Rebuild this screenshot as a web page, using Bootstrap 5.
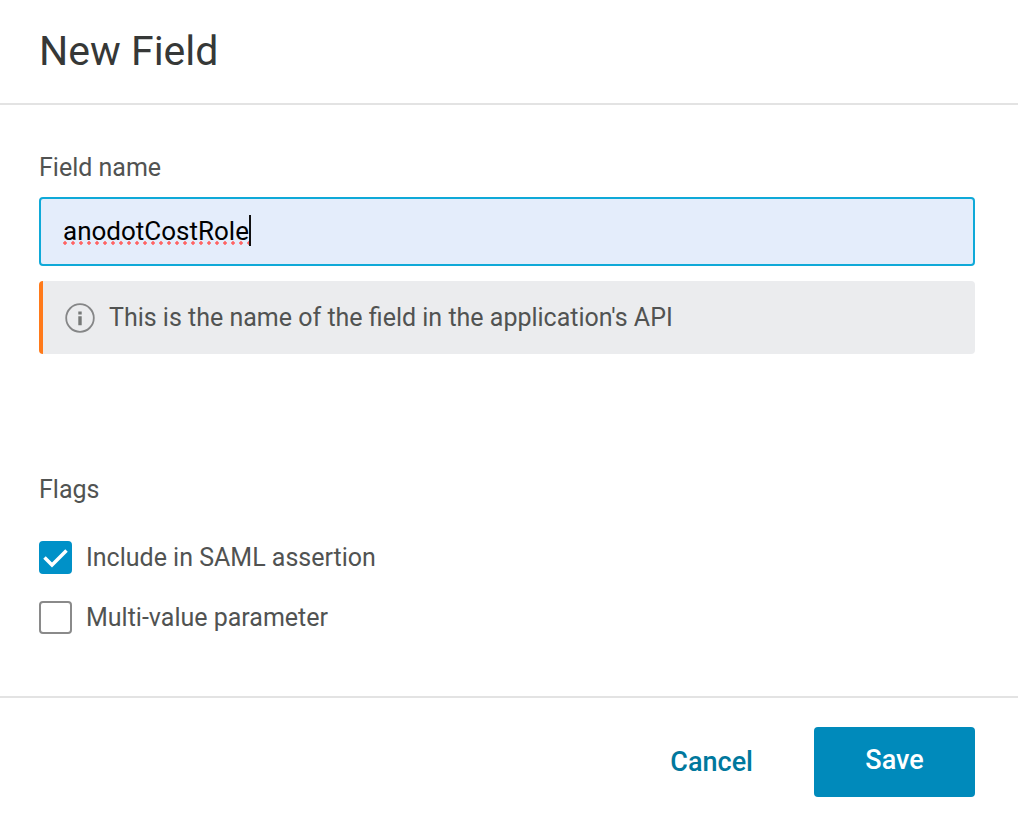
<!DOCTYPE html>
<html lang="en">
<head>
<meta charset="utf-8">
<meta name="viewport" content="width=device-width, initial-scale=1">
<title>New Field</title>
<link href="https://cdn.jsdelivr.net/npm/bootstrap@5.3.0/dist/css/bootstrap.min.css" rel="stylesheet">
<style>
  body { font-family: Roboto, sans-serif; font-size: 25px; line-height: 32px; color: #515352; background: #fff; }
  .dialog-head, .dialog-body, .dialog-foot { padding-left: 39px; padding-right: 43px; }
  .dialog-head { padding-top: 27px; padding-bottom: 28px; border-bottom: 2px solid #e3e3e3; }
  .dialog-head h1 { font-size: 41px; line-height: 48px; font-weight: 400; color: #363837; }
  .dialog-body { padding-top: 47px; padding-bottom: 62px; }
  .dialog-foot { padding-top: 29px; padding-bottom: 24px; border-top: 2px solid #e3e3e3; }
  .field-label { margin-bottom: 13px; }
  .name-input, .name-input:focus {
    height: 69px; padding: 0 22px 2px; font-size: 26px; line-height: 32px; color: #000;
    background: #e4edfb; border: 2px solid #0fa9d8; border-radius: 4px; box-shadow: none; caret-color: transparent;
  }
  .typed-mark { left: 24px; top: 18px; height: 31px; font-size: 26px; line-height: 31px; color: transparent; border-right: 2px solid #111; pointer-events: none; user-select: none; }
  .typed-mark::after { content: ""; position: absolute; left: 0; right: 0; bottom: 1px; height: 4px; background: radial-gradient(circle at 2px 2px, #ff6464 1px, #ff646499 2px, transparent 2px) 0 0 / 8px 4px repeat-x; }
  .hint { margin-top: 15px; padding: 21px 22px 20px; gap: 14px; background: #ebecee; border-left: 4px solid #ff7a1a; border-radius: 4px; }
  .flags { margin-top: 120px; }
  .flags legend { font-size: 25px; line-height: 32px; margin-bottom: 35px; }
  .flag-list { gap: 27px; }
  .flag { gap: 14px; min-height: 33px; margin: 0; padding: 0; }
  .flag .form-check-input { width: 33px; height: 33px; margin: 0; float: none; border: 2px solid #8a8a8a; border-radius: 4px; box-shadow: none; }
  .flag .form-check-input:checked {
    background-color: #0091c8; border-color: #0091c8; background-size: 29px 29px;
    background-image: url("data:image/svg+xml,%3csvg xmlns='http://www.w3.org/2000/svg' viewBox='0 0 29 29'%3e%3cpath fill='none' stroke='%23fff' stroke-width='3.500' d='M3.500 14.500l7.500 7.500L25.500 7.500'/%3e%3c/svg%3e");
  }
  .action { height: 70px; font-size: 27px; line-height: 32px; font-weight: 500; border-radius: 4px; }
  .action-cancel, .action-cancel:hover { color: #00789d; padding: 0 16px; margin-right: 45px; }
  .action-save, .action-save:hover { color: #fff; background: #008abb; min-width: 161px; padding: 0 0 4px; }
</style>
</head>
<body>
<main>
  <header class="dialog-head">
    <h1 class="m-0">New Field</h1>
  </header>
  <form>
    <div class="dialog-body">
      <label for="fieldName" class="field-label d-block">Field name</label>
      <div class="position-relative">
        <input id="fieldName" type="text" class="form-control name-input" value="anodotCostRole" autocomplete="off">
        <span class="typed-mark position-absolute" aria-hidden="true">anodotCostRole</span>
      </div>
      <div class="hint d-flex align-items-center">
        <svg width="30" height="30" viewBox="0 0 30 30" fill="none" aria-hidden="true" class="flex-shrink-0">
          <circle cx="15" cy="15" r="13.800" stroke="#858687" stroke-width="1.800"/>
          <path d="M13.300 8.500h3.400v3h-3.400zM13.300 13.300h3.400v9h-3.400z" fill="#777978"/>
        </svg>
        <span>This is the name of the field in the application's API</span>
      </div>
      <fieldset class="flags">
        <legend>Flags</legend>
        <div class="flag-list d-flex flex-column">
          <div class="form-check flag d-flex align-items-center">
            <input class="form-check-input" type="checkbox" id="saml" checked>
            <label for="saml">Include in SAML assertion</label>
          </div>
          <div class="form-check flag d-flex align-items-center">
            <input class="form-check-input" type="checkbox" id="multi">
            <label for="multi">Multi-value parameter</label>
          </div>
        </div>
      </fieldset>
    </div>
    <footer class="dialog-foot d-flex justify-content-end">
      <button type="button" class="btn border-0 action action-cancel">Cancel</button>
      <button type="button" class="btn border-0 action action-save">Save</button>
    </footer>
  </form>
</main>
<script src="https://cdn.jsdelivr.net/npm/bootstrap@5.3.0/dist/js/bootstrap.bundle.min.js"></script>
</body>
</html>
